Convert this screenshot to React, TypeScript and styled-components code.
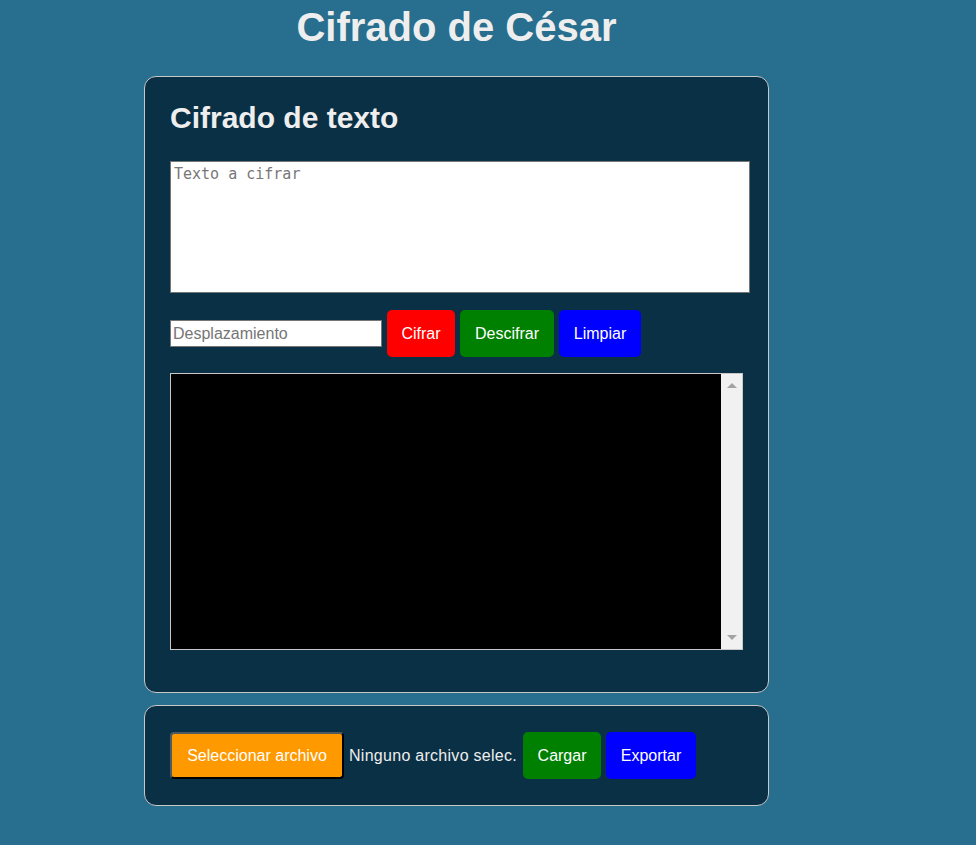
import React from "react";
import styled, { createGlobalStyle } from "styled-components";

const Global = createGlobalStyle`
  html, body {
    margin: 0;
    padding: 0;
    background: #286e8e;
    font-family: "Liberation Sans", Arial, sans-serif;
  }
`;

const Page = styled.main`
  width: 625px;
  margin-left: 144px;
  display: flex;
  flex-direction: column;
  padding-bottom: 40px;
`;

const Title = styled.h1`
  margin: 4px 0 26px;
  font-size: 40px;
  line-height: 46px;
  font-weight: bold;
  text-align: center;
  color: #eeeeee;
`;

const Panel = styled.section<{ $pad: string }>`
  background: #0a3045;
  border: 1px solid #c8c8c8;
  border-radius: 12px;
  padding: ${(p) => p.$pad};
  display: flex;
  flex-direction: column;
  & + & {
    margin-top: 12px;
  }
`;

const Heading = styled.h2`
  margin: 0 0 26px;
  font-size: 30px;
  line-height: 34px;
  font-weight: bold;
  color: #eeeeee;
`;

const TextInput = styled.textarea`
  box-sizing: border-box;
  width: 580px;
  height: 132px;
  margin: 0;
  padding: 3px 3px;
  border: 1px solid #767676;
  background: #fff;
  resize: none;
  font-family: "DejaVu Sans Mono", "Liberation Mono", monospace;
  font-size: 15px;
  line-height: 18px;
  color: #222;
  &::placeholder {
    color: #777;
  }
`;

const Row = styled.div<{ $mt?: number }>`
  display: flex;
  align-items: center;
  gap: 5px;
  margin-top: ${(p) => p.$mt ?? 0}px;
`;

const ShiftInput = styled.input`
  box-sizing: border-box;
  width: 212px;
  height: 27px;
  margin: 0;
  padding: 1px 2px;
  border: 1px solid #767676;
  background: #fff;
  font-family: "Liberation Sans", Arial, sans-serif;
  font-size: 16px;
  color: #222;
  &::placeholder {
    color: #767676;
  }
`;

const Button = styled.button<{ $bg: string; $w: number }>`
  box-sizing: border-box;
  height: 47px;
  width: ${(p) => p.$w}px;
  padding: 0;
  border: none;
  border-radius: 5px;
  background: ${(p) => p.$bg};
  color: #ffffff;
  font-family: "Liberation Sans", Arial, sans-serif;
  font-size: 16px;
  cursor: pointer;
`;

const FileButton = styled.button`
  box-sizing: border-box;
  height: 47px;
  width: 174px;
  padding: 0;
  border: 2px solid;
  border-color: #4f5b60 #000 #000 #4f5b60;
  border-radius: 4px;
  background: #ff9900;
  color: #ffffff;
  font-family: "Liberation Sans", Arial, sans-serif;
  font-size: 16px;
`;

const FileLabel = styled.span`
  color: #eeeeee;
  font-size: 16px;
  letter-spacing: 0.28px;
  margin-right: 1px;
`;

const Output = styled.div`
  margin-top: 16px;
  width: 573px;
  height: 277px;
  box-sizing: border-box;
  border: 1px solid #c8c8c8;
  display: flex;
`;

const OutputText = styled.textarea`
  flex: 1;
  margin: 0;
  padding: 0;
  border: none;
  background: #000;
  color: #fff;
  resize: none;
  outline: none;
`;

const Track = styled.div`
  width: 21px;
  background: #f1f1f1;
  display: flex;
  flex-direction: column;
  justify-content: space-between;
  align-items: center;
  padding: 9px 0 9px;
`;

const Arrow = ({ down }: { down?: boolean }) => (
  <svg width="10" height="5" viewBox="0 0 10 5">
    <polygon
      points={down ? "0,0 10,0 5,5" : "5,0 10,5 0,5"}
      fill="#a3a3a3"
    />
  </svg>
);

export default function App() {
  return (
    <>
      <Global />
      <Page>
        <Title>Cifrado de César</Title>
        <Panel $pad="24px 25px 42px">
          <Heading>Cifrado de texto</Heading>
          <TextInput placeholder="Texto a cifrar" />
          <Row $mt={17}>
            <ShiftInput placeholder="Desplazamiento" />
            <Button $bg="#ff0000" $w={68}>Cifrar</Button>
            <Button $bg="#008000" $w={94}>Descifrar</Button>
            <Button $bg="#0000ff" $w={82}>Limpiar</Button>
          </Row>
          <Output>
            <OutputText readOnly />
            <Track>
              <Arrow />
              <Arrow down />
            </Track>
          </Output>
        </Panel>
        <Panel $pad="26px 25px">
          <Row>
            <FileButton>Seleccionar archivo</FileButton>
            <FileLabel>Ninguno archivo selec.</FileLabel>
            <Button $bg="#008000" $w={78}>Cargar</Button>
            <Button $bg="#0000ff" $w={90}>Exportar</Button>
          </Row>
        </Panel>
      </Page>
    </>
  );
}
